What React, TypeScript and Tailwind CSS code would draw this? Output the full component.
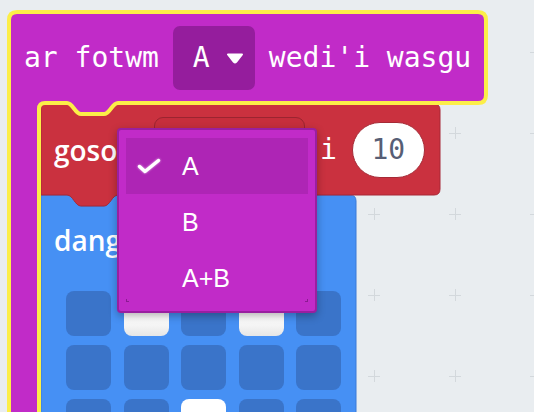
import React from "react";

// micro:bit LED pattern for the "dangos LEDs" block
const leds = [
  [0, 1, 0, 1, 0],
  [0, 0, 0, 0, 0],
  [0, 0, 1, 0, 0],
  [1, 0, 0, 0, 1],
  [0, 1, 1, 1, 0],
];

const menuItems = ["A", "B", "A+B"];

const mono = "font-['DejaVu_Sans_Mono',monospace]";

function WorkspaceGrid() {
  const xs = [50, 131, 212, 293, 374, 455, 536];
  const ys = [52, 133, 214, 295, 376];
  return (
    <svg className="absolute inset-0" width={534} height={412}>
      {xs.flatMap((x) =>
        ys.map((y) => (
          <path
            key={`${x}-${y}`}
            d={`M${x - 6} ${y + 0.5}h12M${x + 0.5} ${y - 6}v12`}
            stroke="#d3d8dc"
            strokeWidth={1}
          />
        ))
      )}
    </svg>
  );
}

// block outlines (notches, C-shape of the event block)
function BlockShapes() {
  return (
    <svg className="absolute inset-0" width={534} height={412}>
      {/* show leds */}
      <path
        d="M41 195H67C73 195 75 206 81 206H104C110 206 112 195 118 195H350Q356 195 356 201V430H41Z"
        fill="#4690f4"
        stroke="#3a7bd8"
      />
      {/* set variable */}
      <path
        d="M41 104H67C73 104 75 115 81 115H104C110 115 112 104 118 104H434Q440 104 440 110V189Q440 195 434 195H118C112 195 110 206 104 206H81C75 206 73 195 67 195H41Z"
        fill="#ca313f"
        stroke="#a82936"
      />
      {/* on button pressed (selected) */}
      <path
        d="M9 440V20Q9 12 17 12H478Q486 12 486 20V95Q486 103 478 103H118C112 103 110 114 104 114H81C75 114 73 103 67 103H45Q39 103 39 109V440Z"
        fill="#c12bc8"
        stroke="#fcee48"
        strokeWidth={4}
        strokeLinejoin="round"
      />
    </svg>
  );
}

export default function App() {
  return (
    <div className="relative w-[534px] h-[412px] overflow-hidden bg-[#e9edf0] select-none">
      <WorkspaceGrid />
      <BlockShapes />

      {/* event header */}
      <div
        className={`absolute left-[24px] top-[14px] h-[88px] flex items-center gap-[14px] text-white text-[28px] leading-none ${mono}`}
      >
        <span>ar fotwm</span>
        <div className="h-[64px] w-[82px] rounded-[7px] bg-[#951d9d] flex items-center pl-[20px]">
          <span>A</span>
          <svg className="ml-[16px]" width="18" height="11" viewBox="0 0 18 11">
            <path
              d="M2 1.5H16L10.2 8.8Q9 10 7.8 8.8Z"
              fill="white"
              stroke="white"
              strokeWidth={2}
              strokeLinejoin="round"
            />
          </svg>
        </div>
        <span>wedi'i wasgu</span>
      </div>

      {/* set ... to 10 */}
      <div className="absolute left-[54px] top-[105px] h-[90px] flex items-center text-white leading-none">
        <span className="w-[100px] text-[28px] font-semibold font-['Open_Sans',sans-serif]">gosod</span>
        <div className="h-[66px] w-[151px] rounded-[9px] border-[1.5px] border-[#9b2430] bg-[#c62e3c]" />
        <span className={`ml-[15px] text-[28px] ${mono}`}>i</span>
        <div
          className={`ml-[15px] h-[56px] w-[73px] rounded-full bg-white border border-[#a52a36] flex items-center justify-center text-[#575e75] text-[28px] ${mono}`}
        >
          10
        </div>
      </div>

      {/* show leds */}
      <div className="absolute left-[54px] top-[218px] h-[44px] flex items-center text-white text-[28px] leading-none font-semibold font-['Open_Sans',sans-serif]">
        dangos
      </div>
      <div className="absolute left-[66px] top-[291px] grid grid-cols-[repeat(5,45px)] gap-x-[12.5px] gap-y-[9px]">
        {leds.flat().map((on, i) => (
          <div
            key={i}
            className={
              on
                ? "h-[45px] rounded-[8px] bg-linear-to-b from-white from-60% to-[#e6e6e6]"
                : "h-[45px] rounded-[8px] bg-[#3a74c9]"
            }
          />
        ))}
      </div>

      {/* dropdown menu */}
      <div className="absolute left-[117px] top-[128px] w-[200px] h-[185px] rounded-[4px] border-2 border-[#991fa0] bg-[#c12bc8] shadow-[0_3px_8px_rgba(0,0,0,0.3)] px-[7px] pt-[8px] text-white text-[25px] leading-none font-['Liberation_Sans',Arial,sans-serif]">
        {menuItems.map((item, i) => (
          <div
            key={item}
            className={`flex h-[56px] items-center ${i === 0 ? "bg-[#ae25b5]" : ""}`}
          >
            <span className="w-[56px] pl-[11px] flex items-center">
              {i === 0 && (
                <svg width="24" height="16" viewBox="0 0 24 16" className="drop-shadow-[0_0_1px_rgba(255,255,255,0.7)]">
                  <path
                    d="M2.5 8.5L8 13.5L21.5 2.5"
                    fill="none"
                    stroke="white"
                    strokeWidth={3.5}
                    strokeLinecap="round"
                    strokeLinejoin="round"
                  />
                </svg>
              )}
            </span>
            <span>{item}</span>
          </div>
        ))}
        <div className="absolute left-[7px] bottom-[9px] w-[3px] h-[3px] border-l border-b border-[#8c1a93]" />
        <div className="absolute right-[7px] bottom-[9px] w-[3px] h-[3px] border-r border-b border-[#8c1a93]" />
      </div>
    </div>
  );
}
